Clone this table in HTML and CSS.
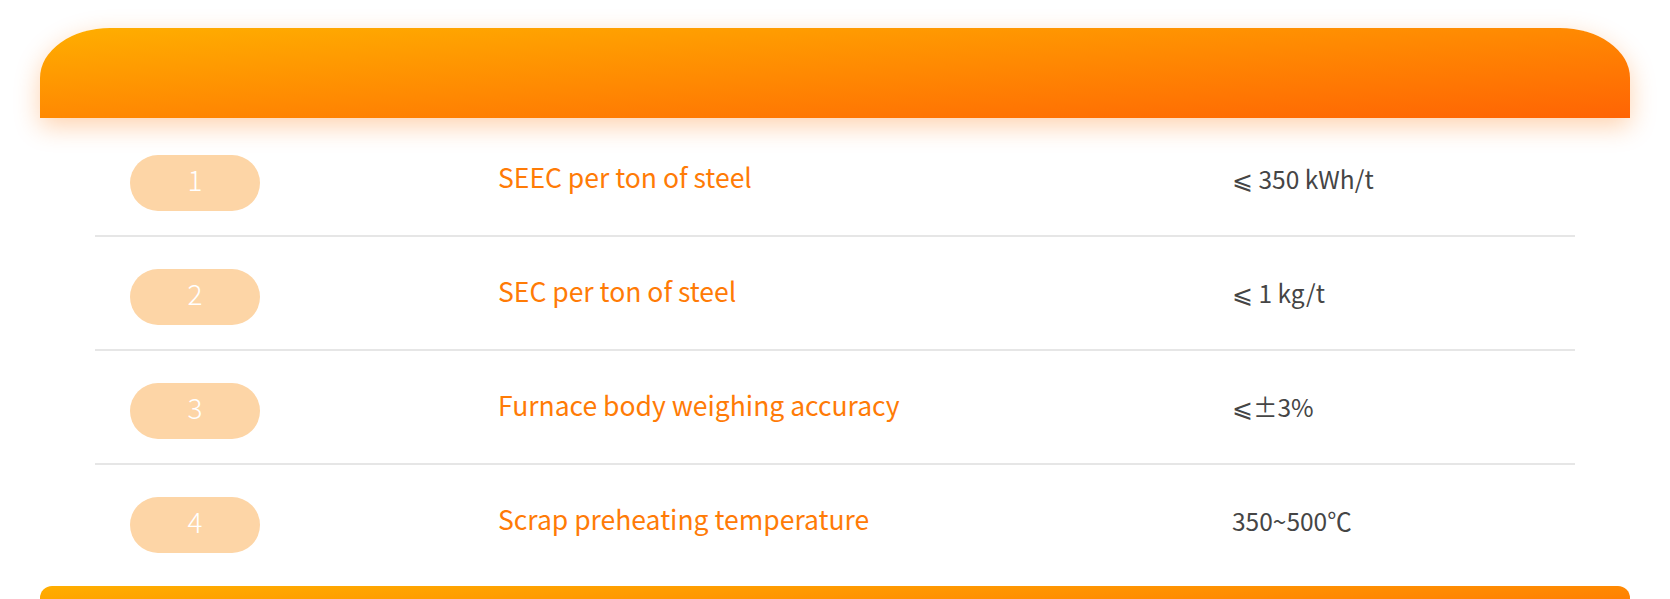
FILE: index.html
```html
<!DOCTYPE html>
<html lang="en">
<head>
<meta charset="utf-8">
<title>Technical indicators</title>
<link rel="stylesheet" href="styles.css">
</head>
<body>
<div class="page">
  <div class="head-bar"></div>
  <div class="list">
    <div class="row">
      <div class="cell-num"><span class="badge">1</span></div>
      <div class="cell-name">SEEC per ton of steel</div>
      <div class="cell-val">⩽ 350 kWh/t</div>
    </div>
    <div class="row">
      <div class="cell-num"><span class="badge">2</span></div>
      <div class="cell-name">SEC per ton of steel</div>
      <div class="cell-val">⩽ 1 kg/t</div>
    </div>
    <div class="row">
      <div class="cell-num"><span class="badge">3</span></div>
      <div class="cell-name">Furnace body weighing accuracy</div>
      <div class="cell-val">⩽±3%</div>
    </div>
    <div class="row">
      <div class="cell-num"><span class="badge">4</span></div>
      <div class="cell-name">Scrap preheating temperature</div>
      <div class="cell-val">350~500℃</div>
    </div>
  </div>
  <div class="foot-bar"></div>
</div>
</body>
</html>
```
FILE: styles.css
```css
html, body {
  margin: 0;
  padding: 0;
  background: #ffffff;
  overflow: hidden;
}
body {
  font-family: "Noto Sans CJK SC", "Noto Sans", sans-serif;
}
.page {
  padding: 28px 40px 0;
}
.head-bar {
  height: 90px;
  border-radius: 70px 70px 0 0 / 50px 50px 0 0;
  background: linear-gradient(to bottom right, #ffae00, #ff6404);
  box-shadow: 0 8px 26px rgba(255, 115, 0, 0.32);
}
.list {
  margin: 5px 55px 0;
}
.row {
  height: 112px;
  display: grid;
  grid-template-columns: 403px 734px 1fr;
  align-items: center;
  border-bottom: 2px solid #e6e6e6;
}
.row:last-child {
  border-bottom: none;
}
.cell-num {
  padding-left: 35px;
  margin-top: 8px;
}
.badge {
  display: flex;
  align-items: center;
  justify-content: center;
  box-sizing: border-box;
  width: 130px;
  height: 56px;
  padding-bottom: 8px;
  border-radius: 28px;
  background: #fdd5a6;
  color: #ffffff;
  font-size: 28px;
  font-weight: 300;
}
.cell-name {
  color: #ff7b06;
  font-size: 26.5px;
  font-weight: 400;
  line-height: 1.2;
  margin-bottom: 5px;
}
.cell-val {
  color: #454545;
  font-size: 24.5px;
  line-height: 1.2;
}
.foot-bar {
  margin-top: 9px;
  height: 60px;
  border-radius: 12px 12px 0 0;
  background: linear-gradient(to bottom right, #ffae00, #ff6404);
}
```
